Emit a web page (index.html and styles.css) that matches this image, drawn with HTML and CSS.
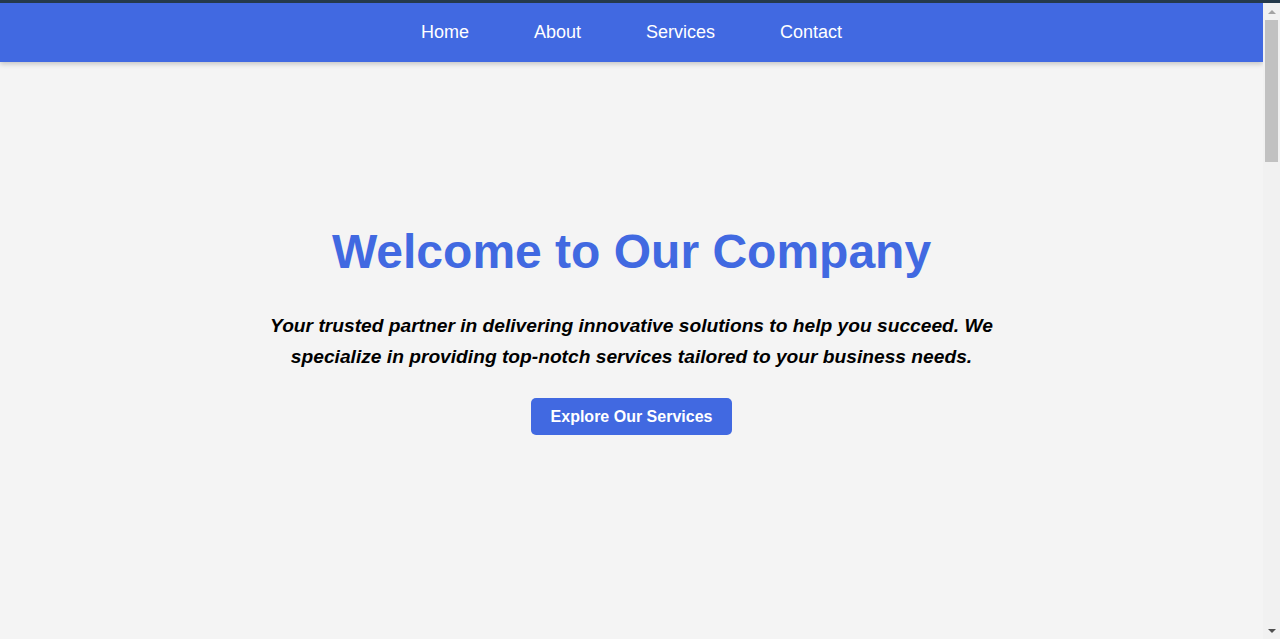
FILE: index.html
```html
<!DOCTYPE html>
<html lang="en">
<head>
<meta charset="utf-8">
<title>Our Company</title>
<link rel="stylesheet" href="styles.css">
</head>
<body>
<div class="topline"></div>
<div class="frame">
  <div class="page">
    <nav class="navbar">
      <ul class="nav-list">
        <li><a class="nav-link" href="#home">Home</a></li>
        <li><a class="nav-link" href="#about">About</a></li>
        <li><a class="nav-link" href="#services">Services</a></li>
        <li><a class="nav-link" href="#contact">Contact</a></li>
      </ul>
    </nav>
    <main>
      <section class="hero" id="home">
        <h1 class="hero-title">Welcome to Our Company</h1>
        <p class="hero-text">Your trusted partner in delivering innovative solutions to help you succeed. We specialize in providing top-notch services tailored to your business needs.</p>
        <a class="hero-button" href="#services">Explore Our Services</a>
      </section>
    </main>
  </div>
  <div class="scrollbar" aria-hidden="true">
    <div class="sb-btn"><span class="sb-arrow-up"></span></div>
    <div class="sb-track"><div class="sb-thumb"></div></div>
    <div class="sb-btn"><span class="sb-arrow-down"></span></div>
  </div>
</div>
</body>
</html>
```
FILE: styles.css
```css
* {
  box-sizing: border-box;
}

html, body {
  margin: 0;
  padding: 0;
  height: 100%;
  overflow: hidden;
}

body {
  background: #f4f4f4;
  font-family: "Liberation Sans", Arial, sans-serif;
  color: #000;
  display: flex;
  flex-direction: column;
}

.topline {
  height: 3px;
  flex: none;
  background: #253a4b;
}

.frame {
  flex: 1;
  display: flex;
  min-height: 0;
}

.page {
  flex: 1;
  min-width: 0;
  overflow: hidden;
}

.navbar {
  background: #4169e1;
  height: 59px;
  display: flex;
  align-items: center;
  justify-content: center;
  box-shadow: 0 2px 5px rgba(0, 0, 0, 0.2);
  position: relative;
  z-index: 1;
}

.nav-list {
  list-style: none;
  margin: 0;
  padding: 0;
  display: flex;
  gap: 65px;
}

.nav-link {
  color: #fff;
  text-decoration: none;
  font-size: 18px;
}

.hero {
  display: flex;
  flex-direction: column;
  align-items: center;
  text-align: center;
  padding: 162px 20px 0;
}

.hero-title {
  margin: 0;
  font-size: 48px;
  font-weight: bold;
  color: #4169e1;
  line-height: 55px;
}

.hero-text {
  margin: 31px 0 0;
  max-width: 800px;
  font-size: 19.2px;
  font-weight: bold;
  font-style: italic;
  line-height: 31px;
}

.hero-button {
  margin-top: 26px;
  display: inline-block;
  background: #4169e1;
  color: #fff;
  text-decoration: none;
  font-size: 16px;
  font-weight: bold;
  line-height: 19px;
  padding: 9px 20px;
  border-radius: 5px;
}

.scrollbar {
  width: 17px;
  flex: none;
  background: #f1f1f1;
  display: flex;
  flex-direction: column;
}

.sb-btn {
  height: 17px;
  flex: none;
  display: flex;
  align-items: center;
  justify-content: center;
}

.sb-arrow-up {
  width: 0;
  height: 0;
  border-left: 4px solid transparent;
  border-right: 4px solid transparent;
  border-bottom: 4px solid #a3a3a3;
}

.sb-arrow-down {
  width: 0;
  height: 0;
  border-left: 4px solid transparent;
  border-right: 4px solid transparent;
  border-top: 4px solid #505050;
}

.sb-track {
  flex: 1;
  padding: 0 2px;
}

.sb-thumb {
  height: 142px;
  background: #c1c1c1;
}
```
